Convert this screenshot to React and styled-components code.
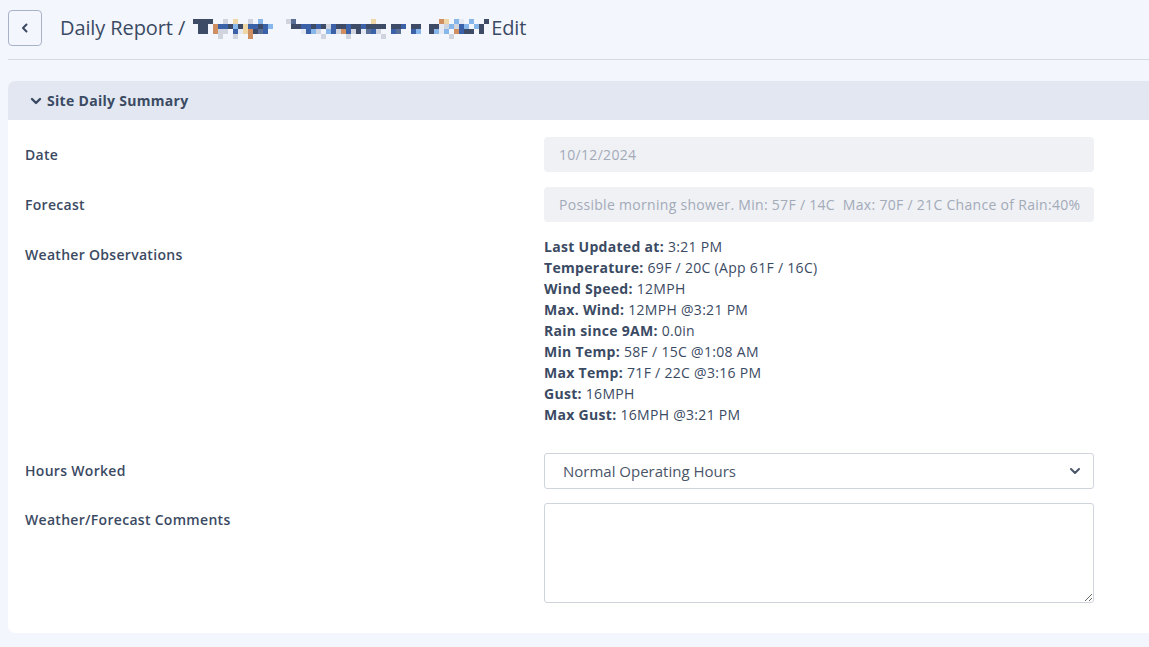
import React from "react";
import styled, { createGlobalStyle } from "styled-components";

const Global = createGlobalStyle`
  html, body {
    margin: 0;
    padding: 0;
    background: #f3f6fd;
    font-family: "Open Sans", "Noto Sans", sans-serif;
    color: #3b4a63;
  }
  * { box-sizing: border-box; }
`;

const Page = styled.div`
  padding: 9px 0 0 8px;
  min-height: 647px;
  overflow: hidden;
`;

const TopBar = styled.header`
  display: flex;
  align-items: center;
  gap: 18px;
  height: 37px;
`;

const BackButton = styled.button`
  width: 34px;
  height: 36px;
  border: 1px solid #a9b3c7;
  border-radius: 4px;
  background: #f3f6fd;
  display: flex;
  align-items: center;
  justify-content: center;
  padding: 0;
  color: #3b4a63;
`;

const Title = styled.h1`
  margin: 0;
  font-size: 20px;
  font-weight: 500;
  letter-spacing: -0.1px;
  color: #3b4a63;
  display: flex;
  align-items: center;
  gap: 0;
`;

const Divider = styled.hr`
  border: 0;
  border-top: 1px solid #d6dae3;
  margin: 13px 0 21px 0;
`;

const Mosaic = styled.span`
  display: inline-grid;
  grid-auto-flow: column;
  grid-template-rows: repeat(4, 5px);
  grid-auto-columns: 5px;
  margin: 2px ${(p) => p.$gap}px 0 ${(p) => p.$left || 0}px;
`;

const Cell = styled.span`
  background: ${(p) => p.$c};
`;

const Card = styled.section`
  background: #ffffff;
  border-radius: 7px 0 0 7px;
  overflow: hidden;
  height: 552px;
`;

const CardHeader = styled.div`
  background: #e2e7f1;
  height: 39px;
  display: flex;
  align-items: center;
  gap: 5px;
  padding-left: 22px;
  font-size: 14px;
  letter-spacing: 0.3px;
  font-weight: 700;
  color: #3b4a63;
`;

const Form = styled.div`
  display: grid;
  grid-template-columns: 519px 550px;
  row-gap: 15px;
  padding: 17px 0 0 17px;
  font-size: 14px;
  letter-spacing: 0.3px;
`;

const Label = styled.div`
  font-weight: 600;
  color: #3b4a63;
  padding-top: ${(p) => p.$top ?? 8}px;
`;

const ReadOnly = styled.div`
  height: 35px;
  background: #eff1f5;
  border-radius: 4px;
  padding: 0 15px;
  display: flex;
  align-items: center;
  color: #a3aab8;
  white-space: nowrap;
  overflow: hidden;
`;

const Observations = styled.div`
  line-height: 21px;
  color: #3b4a63;
  padding: 0 0 13px 0;
  margin-top: -1px;
  b { font-weight: 700; }
`;

const Select = styled.div`
  height: 36px;
  border: 1px solid #cfd4dd;
  border-radius: 3px;
  padding: 0 12px 0 18px;
  display: flex;
  align-items: center;
  justify-content: space-between;
  font-size: 15px;
  letter-spacing: 0;
  color: #4a5568;
`;

const TextArea = styled.textarea`
  height: 100px;
  border: 1px solid #cfd4dd;
  border-radius: 3px;
  resize: vertical;
  font-family: inherit;
  margin: -1px 0 0 0;
  display: block;
  width: 100%;
`;

const palette = {
  d: "#3d4b66",
  b: "#3b62a8",
  l: "#86b6ea",
  t: "#efd6a6",
  o: "#cf8f60",
  g: "#cfd4df",
  p: "#e4e9f4",
  s: "#5a6f96",
};

const words = [
  {
    left: 8,
    gap: 13,
    rows: [
      "dddd..g.t..g.l..",
      ".dd.obbdldtbbdbl",
      ".dd.ogg.bptodsb.",
      ".....g..g..o....",
    ],
  },
  {
    gap: 8,
    rows: [
      "gs...............t.........",
      ".ddbbdbdgbddbddbdddd.ddb.dd",
      "...pblg.lbgobgdpsbg..bs..bl",
      ".......g....g......g.......",
    ],
  },
  {
    gap: 2,
    rows: [
      "..ot.lp.l..d",
      "ddpglgbl.ld.",
      "dlpl.obdd.d.",
      "....g.......",
    ],
  },
];

const Pixelated = ({ rows, gap, left }) => {
  const cols = rows[0].length;
  const cells = [];
  for (let c = 0; c < cols; c++) {
    for (let r = 0; r < rows.length; r++) {
      const k = rows[r][c];
      cells.push(<Cell key={`${c}-${r}`} $c={palette[k] || "transparent"} />);
    }
  }
  return <Mosaic $gap={gap} $left={left}>{cells}</Mosaic>;
};

const obs = [
  ["Last Updated at:", "3:21 PM"],
  ["Temperature:", "69F / 20C (App 61F / 16C)"],
  ["Wind Speed:", "12MPH"],
  ["Max. Wind:", "12MPH @3:21 PM"],
  ["Rain since 9AM:", "0.0in"],
  ["Min Temp:", "58F / 15C @1:08 AM"],
  ["Max Temp:", "71F / 22C @3:16 PM"],
  ["Gust:", "16MPH"],
  ["Max Gust:", "16MPH @3:21 PM"],
];

const Chevron = ({ size = 12, w = 2.4 }) => (
  <svg width={size} height={size} viewBox="0 0 12 12" fill="none">
    <path d="M2 4l4 4 4-4" stroke="currentColor" strokeWidth={w} strokeLinecap="round" strokeLinejoin="round" />
  </svg>
);

export default function App() {
  return (
    <>
      <Global />
      <Page>
        <TopBar>
          <BackButton>
            <svg width="10" height="12" viewBox="0 0 10 12" fill="none">
              <path d="M6.5 2.5L3 6l3.5 3.5" stroke="#3b4a63" strokeWidth="2" strokeLinecap="round" strokeLinejoin="round" />
            </svg>
          </BackButton>
          <Title>
            <span>Daily Report /</span>
            {words.map((w, i) => (
              <Pixelated key={i} rows={w.rows} gap={w.gap} left={w.left} />
            ))}
            <span>Edit</span>
          </Title>
        </TopBar>
        <Divider />
        <Card>
          <CardHeader>
            <Chevron />
            Site Daily Summary
          </CardHeader>
          <Form>
            <Label>Date</Label>
            <ReadOnly>10/12/2024</ReadOnly>
            <Label>Forecast</Label>
            <ReadOnly>Possible morning shower. Min: 57F / 14C&nbsp; Max: 70F / 21C Chance of Rain:40%</ReadOnly>
            <Label>Weather Observations</Label>
            <Observations>
              {obs.map(([k, v]) => (
                <div key={k}>
                  <b>{k}</b> {v}
                </div>
              ))}
            </Observations>
            <Label>Hours Worked</Label>
            <Select>
              <span>Normal Operating Hours</span>
              <Chevron size={12} w={2} />
            </Select>
            <Label $top={6}>Weather/Forecast Comments</Label>
            <TextArea />
          </Form>
        </Card>
      </Page>
    </>
  );
}
